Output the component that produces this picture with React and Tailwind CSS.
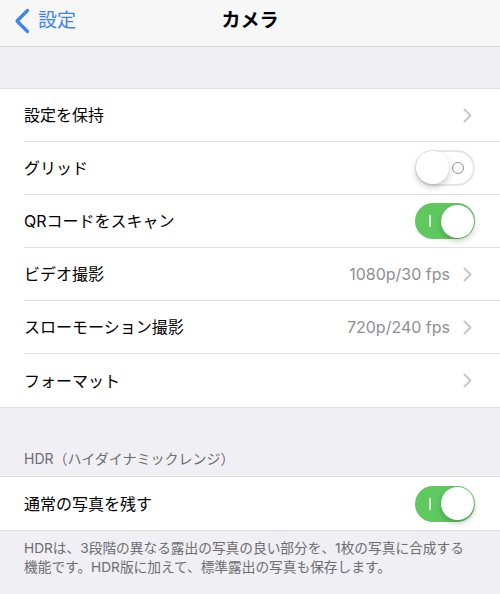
import React from 'react';

const font = { fontFamily: 'Inter, "Noto Sans CJK JP", "Noto Sans", sans-serif' };

const Chevron = () => (
  <svg width="9" height="15" viewBox="0 0 9 15" className="ml-[13px]">
    <path d="M1.5 1.5 L7.5 7.5 L1.5 13.5" fill="none" stroke="#c7c7cc" strokeWidth="2" strokeLinecap="round" strokeLinejoin="round" />
  </svg>
);

const Toggle = ({ on }) => (
  <div className={`relative w-[60px] h-[36px] rounded-full ${on ? 'bg-[#5fc95f]' : 'bg-white border-2 border-[#e6e6ea]'}`}>
    {on ? (
      <div className="absolute left-[14px] top-[12px] w-[2px] h-[12px] bg-white/80 rounded" />
    ) : (
      <div className="absolute right-[9px] top-[10px] w-[12px] h-[12px] rounded-full border border-[#8e8e93]" />
    )}
    <div className={`absolute w-[33px] h-[33px] rounded-full bg-white shadow-[0_3px_6px_rgba(0,0,0,0.22)] ${on ? 'right-[1.5px] top-[1.5px]' : 'left-[-1px] top-[-1px]'}`} />
  </div>
);

const Row = ({ label, value, chevron, toggle, last }) => (
  <div className="pl-6 bg-white">
    <div className={`h-[53px] flex items-center ${toggle !== undefined ? 'pr-[25px]' : 'pr-[28px]'} ${last ? '' : 'border-b border-[#e0e0e4]'}`}>
      <span className="flex-1 text-[16px] text-black">{label}</span>
      {value && <span className="text-[16px] text-[#8e8e93]">{value}</span>}
      {chevron && <Chevron />}
      {toggle !== undefined && <Toggle on={toggle} />}
    </div>
  </div>
);

export default function App() {
  const rows = [
    { label: '設定を保持', chevron: true },
    { label: 'グリッド', toggle: false },
    { label: 'QRコードをスキャン', toggle: true },
    { label: 'ビデオ撮影', value: '1080p/30 fps', chevron: true },
    { label: 'スローモーション撮影', value: '720p/240 fps', chevron: true },
    { label: 'フォーマット', chevron: true },
  ];

  return (
    <div style={font} className="w-[500px] h-[594px] bg-[#efeff4] overflow-hidden">
      <div className="h-[47px] bg-[#f7f7f8] border-b border-[#d6d6da] relative flex items-center justify-center pb-[4px]">
        <div className="absolute left-[13px] top-0 h-[42px] flex items-center">
          <svg width="18" height="26" viewBox="0 0 18 26">
            <path d="M14.5 2.5 L4 13 L14.5 23.5" fill="none" stroke="#3a82f7" strokeWidth="3.2" strokeLinecap="round" strokeLinejoin="round" />
          </svg>
          <span className="ml-[7px] text-[19px] text-[#3a82f7]">設定</span>
        </div>
        <span className="text-[19px] font-bold text-black">カメラ</span>
      </div>

      <div className="h-[41px]" />

      <div className="border-t border-b border-[#dcdce0]">
        {rows.map((r, i) => (
          <Row key={i} {...r} last={i === rows.length - 1} />
        ))}
      </div>

      <div className="h-[68px] flex items-end px-6 pb-[7px]">
        <span className="text-[14px] text-[#6d6d72]">HDR（ハイダイナミックレンジ）</span>
      </div>

      <div className="border-t border-b border-[#dcdce0]">
        <Row label="通常の写真を残す" toggle={true} last />
      </div>

      <div className="px-6 pt-[8px] text-[13.7px] leading-[19px] text-[#6d6d72]">
        HDRは、3段階の異なる露出の写真の良い部分を、1枚の写真に合成する機能です。HDR版に加えて、標準露出の写真も保存します。
      </div>
    </div>
  );
}
